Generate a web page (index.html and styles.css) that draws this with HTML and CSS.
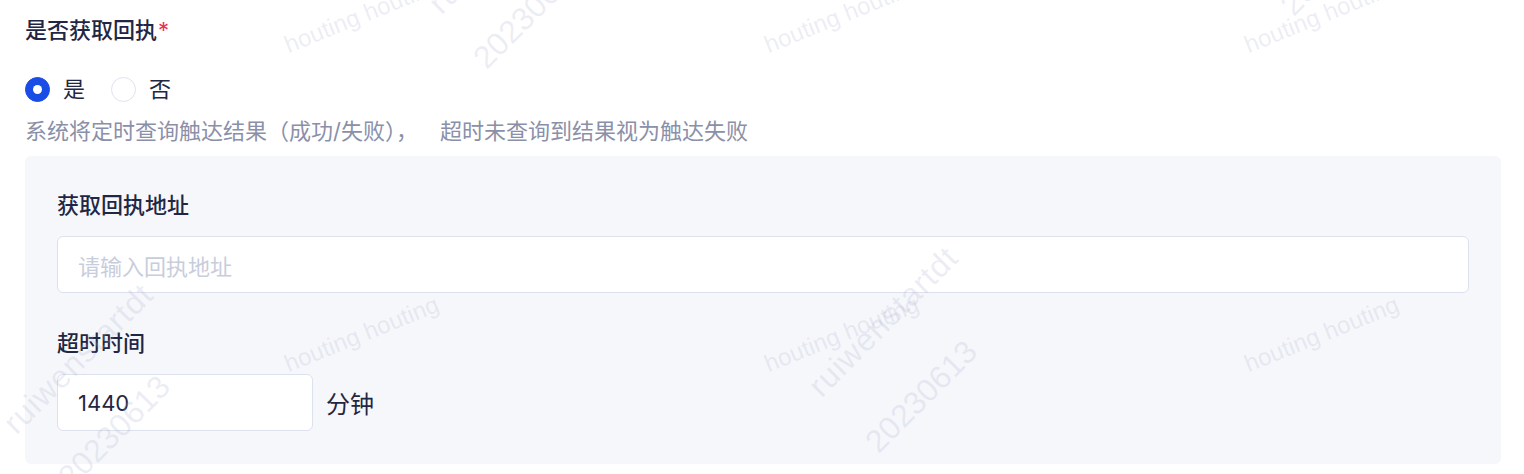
FILE: index.html
```html
<!DOCTYPE html>
<html lang="zh-CN">
<head>
<meta charset="utf-8">
<title>获取回执</title>
<link rel="stylesheet" href="styles.css">
</head>
<body>
<div class="page">
  <div class="form">
    <div class="label">是否获取回执<span class="req">*</span></div>
    <div class="radios">
      <label class="radio">
        <span class="dot checked"></span>
        <span class="radio-text">是</span>
      </label>
      <label class="radio">
        <span class="dot"></span>
        <span class="radio-text">否</span>
      </label>
    </div>
    <div class="help">系统将定时查询触达结果（成功/失败）， 超时未查询到结果视为触达失败</div>
    <div class="panel">
      <div class="sub-label">获取回执地址</div>
      <div class="input wide"><span class="placeholder">请输入回执地址</span></div>
      <div class="sub-label second">超时时间</div>
      <div class="inline">
        <div class="input short"><span class="value">1440</span></div>
        <span class="unit">分钟</span>
      </div>
    </div>
  </div>

  <div class="watermarks" aria-hidden="true">
    <span class="wm small w1">houting houting</span>
    <span class="wm small w2">houting houting</span>
    <span class="wm small w3">houting houting</span>
    <span class="wm small w4">houting houting</span>
    <span class="wm small w5">houting houting</span>
    <span class="wm small w6">houting houting</span>
    <span class="wm big r1">ruiwenstartdt</span>
    <span class="wm big r2">ruiwenstartdt</span>
    <span class="wm big r3">ruiwenstartdt</span>
    <span class="wm big d1">20230613</span>
    <span class="wm big d2">20230613</span>
    <span class="wm big d3">20230613</span>
    <span class="wm big d4">20230613</span>
  </div>
</div>
</body>
</html>
```

FILE: styles.css
```css
* { box-sizing: border-box; }

html, body {
  margin: 0;
  padding: 0;
  background: #ffffff;
}

body {
  font-family: Inter, "Noto Sans CJK SC", "Noto Sans", sans-serif;
  color: #1f2745;
  width: 1524px;
  height: 474px;
  overflow: hidden;
}

.page {
  position: relative;
  width: 1524px;
  height: 474px;
}

.form {
  padding: 15px 23px 0 25px;
  display: flex;
  flex-direction: column;
}

.label {
  font-size: 22px;
  line-height: 30px;
  font-weight: 500;
  color: #1f2745;
}

.req {
  color: #ee2f53;
  font-weight: 400;
  margin-left: 1px;
}

.radios {
  display: flex;
  align-items: center;
  margin-top: 29px;
  height: 30px;
}

.radio {
  display: flex;
  align-items: center;
  margin-right: 26px;
}

.dot {
  width: 25px;
  height: 25px;
  border-radius: 50%;
  border: 1px solid #dfe3ee;
  background: #ffffff;
  display: flex;
  align-items: center;
  justify-content: center;
}

.dot.checked {
  background: #1a4ce6;
  border-color: #1a4ce6;
}

.dot.checked::after {
  content: "";
  width: 9px;
  height: 9px;
  border-radius: 50%;
  background: #ffffff;
}

.radio-text {
  font-size: 22px;
  line-height: 30px;
  margin-left: 13px;
  color: #1f2745;
}

.help {
  margin-top: 12px;
  font-size: 22px;
  line-height: 30px;
  color: #8b90a9;
  word-spacing: 16px;
}

.panel {
  margin-top: 10px;
  background: #f6f7fb;
  border-radius: 6px;
  padding: 34px 32px 33px 32px;
  display: flex;
  flex-direction: column;
}

.sub-label {
  font-size: 22px;
  line-height: 30px;
  font-weight: 500;
  color: #1f2745;
}

.sub-label.second {
  margin-top: 35px;
}

.input {
  margin-top: 16px;
  height: 57px;
  background: #ffffff;
  border: 1px solid #dde1ee;
  border-radius: 6px;
  display: flex;
  align-items: center;
  padding-left: 20px;
  font-size: 22px;
}

.input.wide { width: 100%; }

.input.short {
  width: 256px;
  margin-top: 0;
}

.placeholder { color: #c8cddc; }

.value { color: #1f2745; }

.inline {
  margin-top: 16px;
  display: flex;
  align-items: center;
}

.unit {
  margin-left: 13px;
  font-size: 24px;
  color: #1f2745;
}

.watermarks {
  position: absolute;
  inset: 0;
  pointer-events: none;
  overflow: hidden;
}

.wm {
  position: absolute;
  font-family: "Liberation Sans", Arial, sans-serif;
  color: rgba(170, 176, 205, 0.22);
  white-space: nowrap;
  line-height: 1;
  transform-origin: 0 100%;
}

.wm.small {
  font-size: 24px;
  transform: rotate(-22deg);
}

.wm.big {
  font-size: 32px;
  transform: rotate(-45deg);
}

.r1, .r2, .r3 { letter-spacing: 1px; }

.w1 { left: 290px; top: 33px; }
.w2 { left: 770px; top: 33px; }
.w3 { left: 1250px; top: 33px; }
.w4 { left: 290px; top: 352px; }
.w5 { left: 770px; top: 352px; }
.w6 { left: 1250px; top: 352px; }

.r1 { left: 825px; top: 370px; }
.r2 { left: 20px; top: 407px; }
.r3 { left: 445px; top: -13px; }

.d1 { left: 882px; top: 426px; }
.d2 { left: 75px; top: 461px; }
.d3 { left: 490px; top: 42px; }
.d4 { left: 1297px; top: -11px; }
```
